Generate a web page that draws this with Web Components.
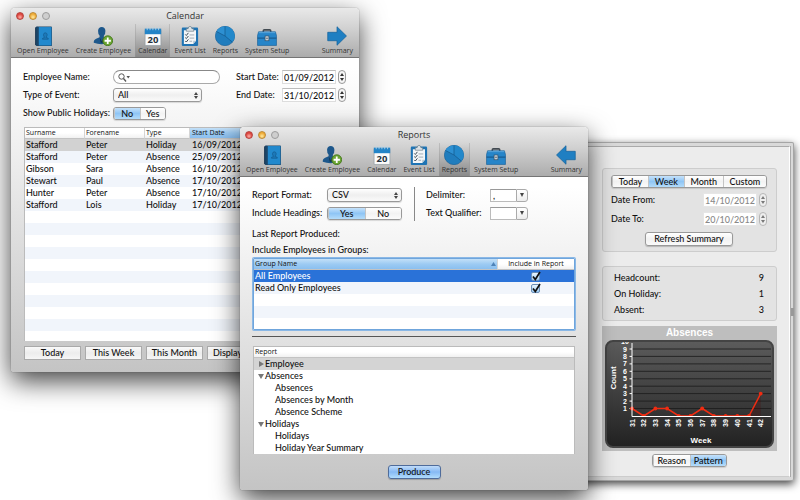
<!DOCTYPE html>
<html lang="en">
<head>
<meta charset="utf-8">
<title>Employee Manager</title>
<style>
  html, body { height: 100%; }
  body {
    margin: 0;
    background: #fff;
    color: #111;
    font: 500 9px/12px Lato, "Noto Sans", sans-serif;
    overflow: hidden;
  }
</style>
</head>
<body>
<app-desktop>
  <side-window slot="summary">
    <summary-pane></summary-pane>
  </side-window>
  <mac-window slot="calendar" heading="Calendar" current="calendar" arrow="right">
    <calendar-pane></calendar-pane>
  </mac-window>
  <mac-window slot="reports" heading="Reports" current="reports" arrow="left">
    <reports-pane></reports-pane>
  </mac-window>
</app-desktop>

<script>
const icons = {
  employee: `
    <path d="M2 1.5 4 .5V19L2 18z" fill="#173450"/>
    <rect x="3" y=".5" width="15" height="18.500" rx=".8" fill="#1c4669"/>
    <rect x="5.500" y="1" width="12" height="17.500" fill="#2289cd"/>
    <path d="M9 12.500V11.800L11 10.800Q9.800 9.500 10 8Q10.200 6.500 11.700 6.500T13.400 8Q13.600 9.500 12.400 10.800L14.500 11.800V12.500z" fill="#1c79b9" stroke="#145d92" stroke-width=".7"/>`,
  create: `
    <path d="M.7 16Q.5 13 3 12L6.300 10.600 6.200 9Q4.700 7.500 4.800 4.500Q5.200 1 8.300 1T11.800 4.500Q11.900 7.500 10.400 9L10.300 10.600 13.500 12Q15.800 13 15.700 16Q8 18.500.7 16z" fill="#1d578b"/>
    <path d="M6.300 10.800 8.300 14.500 10.300 10.800 9.300 16H7.300z" fill="#123653"/>
    <circle cx="14" cy="14" r="4.700" fill="#6ba532" stroke="#3f7419" stroke-width=".8"/>
    <path d="M14 11v6M11 14h6" stroke="#fff" stroke-width="1.700"/>`,
  calendar: `
    <path d="M2 4V18.500H17V4z" fill="#fbfbfb" stroke="#8b979e" stroke-width=".6"/>
    <path d="M1.700 2.500H17.300V7.800H1.700z" fill="#2384c7"/>
    <path d="M4 1v3M6.700 1v3M9.400 1v3M12.100 1v3M14.800 1v3" stroke="#b9d6ea" stroke-width=".8"/>
    <text x="9.500" y="16.500" text-anchor="middle" font-family="Open Sans" font-weight="700" font-size="9" fill="#26333d">20</text>`,
  events: `
    <rect x="1.700" y="1.500" width="15.500" height="17.500" rx="1" fill="#1f74b4"/>
    <path d="M3.700 4H15.200V14L12.500 17H3.700z" fill="#f3f6f8"/>
    <path d="M12.500 17V14H15.200z" fill="#b8c7d2"/>
    <path d="M6 2.500H7.700Q8 .3 9.500.3T11.300 2.500H13V5H6z" fill="#dce2e6" stroke="#667783" stroke-width=".6"/>
    <path d="M5 8 6 9 8 6.500M5 11 6 12 8 9.500M5 14.200 6 15.200 8 12.700" fill="none" stroke="#31404b" stroke-width=".9"/>
    <path d="M9 8.500H13.500M9 11.500H13.500M9 14.500H11.500" stroke="#93a0aa" stroke-width=".8"/>`,
  reports: `
    <circle cx="9.500" cy="9.500" r="9.200" fill="#207dbd" stroke="#165e96" stroke-width=".6"/>
    <path d="M9.500 9.500 1.400 5.200Q4 .5 9.500.5z" fill="#2d90d2"/>
    <path d="M9.500.5A9 9 0 0 1 16.500 15.300L9.500 9.500z" fill="#2388ca"/>
    <path d="M9.500.5V9.500L16.500 15.300M9.500 9.500 1.400 5.200" fill="none" stroke="#155a8e" stroke-width=".7"/>`,
  setup: `
    <path d="M6 6V4.500Q6 3.700 7 3.700H12Q13 3.700 13 4.500V6" fill="none" stroke="#424a51" stroke-width="1.500"/>
    <path d="M1.500 5.500H17.500L18.500 9V18.500H.5V9z" fill="#2685c9" stroke="#195f97" stroke-width=".6"/>
    <path d="M.5 11.500H18.500" stroke="#144f80" stroke-width=".9"/>
    <path d="M1.700 6.300H17.300" stroke="#6bb2e4" stroke-width=".7"/>
    <rect x="7.700" y="9.500" width="3.600" height="4.500" fill="#dfe5e9" stroke="#36536a" stroke-width=".7"/>
    <path d="M9.500 11v1.500" stroke="#26333d" stroke-width="1"/>`,
  right: `<path d="M.7 6H9.500V.7L18.500 9.500 9.500 18.300V14H.7z" fill="#1f7fc2" stroke="#15629c" stroke-width=".7"/>`,
  left: `<path d="M18.300 6H9.500V.7L.5 9.500 9.500 18.300V14H18.300z" fill="#1f7fc2" stroke="#15629c" stroke-width=".7"/>`
};

// Shared pieces that several shadow roots paste into their own <style>
const resets = `
  * { box-sizing: border-box; }
  button, input, select { font: inherit; color: inherit; margin: 0; padding: 0; outline: 0; appearance: none; border-radius: 0; }
`;
const tables = `
  table { width: 100%; border-spacing: 0; table-layout: fixed; }
  td, th { height: 12px; padding: 0 1px; text-align: left; white-space: nowrap; overflow: hidden; line-height: 12px; }
  th { height: 11px; font: 500 7px/10px "Open Sans", sans-serif; background: linear-gradient(#fff 50%, #f1f1f1); border-right: 1px solid #d5d5d5; border-bottom: 1px solid #c3c3c3; }
  th:last-child { border-right: 0; }
  th.sorted { background: linear-gradient(#c3e0f8, #9dcbf3 50%, #8abff0); }
`;

class AppDesktop extends HTMLElement {
  connectedCallback() {
    this.attachShadow({ mode: 'open' });
    this.shadowRoot.innerHTML = `
      <style>
        :host { display: block; position: relative; height: 100%; }
        ::slotted(*) { position: absolute; }
        ::slotted([slot="calendar"]) { left: 11px; top: 8px; width: 43.5%; }
        ::slotted([slot="reports"]) { left: 30%; top: 127px; width: 43.5%; }
        ::slotted([slot="summary"]) { left: 70%; right: 6px; top: 142px; }
      </style>
      <slot name="summary"></slot>
      <slot name="calendar"></slot>
      <slot name="reports"></slot>
    `;
  }
}
customElements.define('app-desktop', AppDesktop);

class MacWindow extends HTMLElement {
  connectedCallback() {
    this.attachShadow({ mode: 'open' });
    const current = this.getAttribute('current');
    const item = (id, label, icon = id) =>
      `<tool-item icon="${icon}" ${id === current ? 'active' : ''}>${label}</tool-item>`;
    this.shadowRoot.innerHTML = `
      <style>
        ${resets}
        :host {
          display: block;
          border-radius: 4px 4px 3px 3px;
          background: linear-gradient(#fff 60px, #c4c4c4);
          box-shadow: 0 0 1px #444, 0 9px 27px rgba(0, 0, 0, .75);
        }
        header {
          height: 50px;
          border-radius: 4px 4px 0 0;
          border-bottom: 1px solid #757575;
          background: linear-gradient(#e9e9e9, #d2d2d2 40%, #acacac);
        }
        .title { display: grid; grid-template-columns: 1fr auto 1fr; align-items: center; height: 16px; padding: 0 5px; }
        .lights { display: flex; gap: 5px; }
        .lights button { width: 8px; height: 8px; border: 1px solid var(--rim); border-radius: 50%; }
        .close { background: radial-gradient(circle at 50% 70%, #ffb0a8, #dd463f 60%); --rim: #b5443f; }
        .min { background: radial-gradient(circle at 50% 70%, #ffe9a0, #efab37 60%); --rim: #bd8a35; }
        .zoom { background: #cecece; --rim: #9c9c9c; }
        h1 { margin: 0; font: 400 9px/12px "Open Sans", sans-serif; color: #333; }
        nav { display: flex; gap: 1px; padding: 0 3px; height: 33px; }
        .gap { flex: 1; }
      </style>
      <header>
        <div class="title">
          <div class="lights">
            <button class="close" aria-label="Close"></button>
            <button class="min" aria-label="Minimise"></button>
            <button class="zoom" aria-label="Zoom"></button>
          </div>
          <h1>${this.getAttribute('heading')}</h1>
        </div>
        <nav>
          ${item('employee', 'Open Employee')}
          ${item('create', 'Create Employee')}
          ${item('calendar', 'Calendar')}
          ${item('events', 'Event List')}
          ${item('reports', 'Reports')}
          ${item('setup', 'System Setup')}
          <span class="gap"></span>
          ${item('summary', 'Summary', this.getAttribute('arrow'))}
        </nav>
      </header>
      <slot></slot>
    `;
  }
}

class ToolItem extends HTMLElement {
  connectedCallback() {
    this.attachShadow({ mode: 'open' });
    this.shadowRoot.innerHTML = `
      <style>
        ${resets}
        :host { display: block; }
        button {
          display: flex; flex-direction: column; align-items: center;
          height: 33px; padding: 2px 3px 0; border: 0; background: none;
          font: 500 7px/10px "Open Sans", sans-serif; color: #333; white-space: nowrap;
        }
        :host([active]) button {
          background: linear-gradient(rgba(0, 0, 0, 0), rgba(0, 0, 0, .2));
          box-shadow: inset 1px 0 #9996, inset -1px 0 #9996;
        }
        svg { width: 20px; height: 20px; }
      </style>
      <button><svg viewBox="0 0 19 19" aria-hidden="true">${icons[this.getAttribute('icon')]}</svg><slot></slot></button>
    `;
  }
}
customElements.define('tool-item', ToolItem);
customElements.define('mac-window', MacWindow);

class SideWindow extends HTMLElement {
  connectedCallback() {
    this.attachShadow({ mode: 'open' });
    this.shadowRoot.innerHTML = `
      <style>
        * { box-sizing: border-box; }
        :host {
          display: flex; box-sizing: border-box; padding: 4px 0 4px 4px;
          border-radius: 2px; background: #d9d9d9;
          box-shadow: inset 0 0 0 1px #a5a5a5, 0 3px 9px rgba(0, 0, 0, .75);
        }
        section { flex: 1; border: 1px solid #aaa; border-right-color: #fff; border-bottom-color: #ccc; background: #ececec; }
        .rail { display: flex; align-items: center; width: 4px; border-left: 1px solid #aaa; }
        .rail i { width: 3px; height: 8px; background: #999; }
      </style>
      <section><slot></slot></section>
      <div class="rail"><i></i></div>
    `;
  }
}
customElements.define('side-window', SideWindow);

class SegControl extends HTMLElement {
  connectedCallback() {
    this.attachShadow({ mode: 'open' });
    const on = this.getAttribute('value');
    this.shadowRoot.innerHTML = `
      <style>
        ${resets}
        :host { display: flex; height: 13px; box-sizing: border-box; border: 1px solid #999; border-radius: 3px; overflow: hidden; box-shadow: 0 1px 1px #0002; }
        button { flex: 1 1 0; border: 0; border-left: 1px solid #c4c4c4; background: linear-gradient(#fff, #f3f3f3 50%, #fbfbfb); line-height: 11px; }
        :host([fit]) button { flex-basis: auto; }
        button:first-child { border-left: 0; }
        button[aria-pressed="true"] { background: linear-gradient(#c5e2fb, #8fc5f5 50%, #b4dcfa); }
      </style>
      ${this.getAttribute('options').split(',').map(o => `<button aria-pressed="${o === on}">${o}</button>`).join('')}
    `;
  }
}
customElements.define('seg-control', SegControl);

class PushButton extends HTMLElement {
  connectedCallback() {
    this.attachShadow({ mode: 'open' });
    this.shadowRoot.innerHTML = `
      <style>
        ${resets}
        :host { display: block; }
        button { width: 100%; height: 14px; border: 1px solid #999; border-radius: 3px; line-height: 12px; background: linear-gradient(#fff, #f2f2f2 50%, #fafafa); box-shadow: 0 1px 1px #0003; white-space: nowrap; }
        :host([square]) button { border-color: #aaa; border-radius: 0; box-shadow: none; background: linear-gradient(#fafafa, #ececec 50%, #f6f6f6); }
        :host([primary]) button { border-color: #4f6c9b; background: linear-gradient(#c0dcfa, #86b9f4 50%, #b1dcfc); }
      </style>
      <button><slot></slot></button>
    `;
  }
}
customElements.define('push-button', PushButton);

class DateField extends HTMLElement {
  connectedCallback() {
    this.attachShadow({ mode: 'open' });
    this.shadowRoot.innerHTML = `
      <style>
        ${resets}
        :host { display: flex; align-items: center; }
        label { flex: 1; }
        input { width: 54px; height: 14px; padding-left: 1px; border: 1px solid #ddd; border-top-color: #bbb; background: #fff; }
        :host([dim]) input { color: #888; border-color: #e6e6e6; }
        button { display: grid; width: 8px; height: 14px; margin-left: 2px; border: 1px solid #999; border-radius: 4px; background: #f6f6f6; place-items: center; }
        :host([dim]) button { opacity: .6; }
        svg { width: 4px; height: 8px; }
      </style>
      <label for="d">${this.getAttribute('label')}</label>
      <input id="d" value="${this.getAttribute('value')}">
      <button aria-label="Step"><svg viewBox="0 0 4 8"><path d="M0 3 2 0 4 3zM0 5 2 8 4 5z" fill="#333"/></svg></button>
    `;
  }
}
customElements.define('date-field', DateField);

// Pop-up menu with its label; the host is display: contents so both sit in the form grid
class PopUp extends HTMLElement {
  connectedCallback() {
    this.attachShadow({ mode: 'open' });
    this.shadowRoot.innerHTML = `
      <style>
        ${resets}
        :host { display: contents; }
        .box { display: grid; align-items: center; width: var(--popup-width, 100%); }
        select { grid-area: 1 / 1; width: 100%; height: 14px; padding: 0 4px; border: 1px solid #999; border-radius: 3px; background: linear-gradient(#fff, #efefef 50%, #fafafa); line-height: 12px; box-shadow: 0 1px 1px #0002; }
        svg { grid-area: 1 / 1; justify-self: end; width: 4px; height: 7px; margin-right: 4px; pointer-events: none; }
      </style>
      <label for="s">${this.getAttribute('label')}</label>
      <div class="box">
        <select id="s"><option>${this.getAttribute('value')}</option></select>
        <svg viewBox="0 0 4 7"><path d="M0 3 2 0 4 3zM0 4 2 7 4 4z" fill="#444"/></svg>
      </div>
    `;
  }
}
customElements.define('pop-up', PopUp);

class ComboBox extends HTMLElement {
  connectedCallback() {
    this.attachShadow({ mode: 'open' });
    this.shadowRoot.innerHTML = `
      <style>
        ${resets}
        :host { display: flex; align-items: center; }
        label { width: 64px; }
        input { width: 26px; height: 13px; padding: 0 2px; border: 1px solid #bbb; border-top-color: #999; border-right: 0; background: #fff; }
        button { display: grid; place-items: center; width: 12px; height: 13px; border: 1px solid #aaa; border-radius: 0 3px 3px 0; background: linear-gradient(#fff, #ededed); }
        svg { width: 4px; height: 4px; }
      </style>
      <label for="c">${this.getAttribute('label')}</label>
      <input id="c" value="${this.getAttribute('value')}">
      <button aria-label="Choose"><svg viewBox="0 0 4 4"><path d="M0 0H4L2 4z" fill="#444"/></svg></button>
    `;
  }
}
customElements.define('combo-box', ComboBox);

class CalendarPane extends HTMLElement {
  connectedCallback() {
    this.attachShadow({ mode: 'open' });
    const rows = [
      ['Stafford', 'Peter', 'Holiday', '16/09/2012'],
      ['Stafford', 'Peter', 'Absence', '25/09/2012'],
      ['Gibson', 'Sara', 'Absence', '16/10/2012'],
      ['Stewart', 'Paul', 'Absence', '17/10/2012'],
      ['Hunter', 'Peter', 'Absence', '17/10/2012'],
      ['Stafford', 'Lois', 'Holiday', '17/10/2012']
    ];
    this.shadowRoot.innerHTML = `
      <style>
        ${resets}
        ${tables}
        :host { display: block; padding: 11px 13px 12px 12px; }
        .form { display: flex; justify-content: space-between; }
        .left { display: grid; grid-template-columns: 90px 107px; grid-auto-rows: 16px; row-gap: 2px; align-items: center; --popup-width: 89px; }
        .search { display: flex; align-items: center; height: 14px; padding: 0 4px; border: 1px solid #aaa; border-top-color: #888; border-radius: 7px; background: #fff; }
        .search svg { width: 12px; height: 9px; }
        .search input { flex: 1; min-width: 0; height: 10px; border: 0; background: none; }
        .dates { display: grid; grid-auto-rows: 16px; row-gap: 2px; align-content: start; width: 110px; }
        seg-control { width: 53px; }
        .list { min-height: 214px; margin: 6px 0 5px 1px; border: 1px solid #bbb; border-bottom: 0; background: repeating-linear-gradient(#fff 0 12px, #f1f5fb 12px 24px) 0 11px; }
        col.name { width: 60px; }
        col.type { width: 45px; }
        td:last-child, th:last-child { padding-left: 2px; }
        tr.selected { background: #d2d2d2; }
        .buttons { display: grid; grid-template-columns: repeat(3, 57px) 41px; gap: 4px; margin-left: 1px; }
      </style>
      <div class="form">
        <div class="left">
          <label for="name">Employee Name:</label>
          <div class="search">
            <svg viewBox="0 0 12 9"><circle cx="3.500" cy="3.500" r="2.700" fill="none" stroke="#555"/><path d="M5.500 5.500 8 8.500" stroke="#555" stroke-width="1.300"/><path d="M8.500 3H12L10.200 5.500z" fill="#555"/></svg>
            <input id="name">
          </div>
          <pop-up label="Type of Event:" value="All"></pop-up>
          <span>Show Public Holidays:</span>
          <seg-control options="No,Yes" value="No" role="group" aria-label="Show Public Holidays"></seg-control>
        </div>
        <div class="dates">
          <date-field label="Start Date:" value="01/09/2012"></date-field>
          <date-field label="End Date:" value="31/10/2012"></date-field>
        </div>
      </div>
      <div class="list">
        <table>
          <colgroup><col class="name"><col class="name"><col class="type"><col></colgroup>
          <thead><tr><th>Surname</th><th>Forename</th><th>Type</th><th class="sorted">Start Date</th></tr></thead>
          <tbody>${rows.map((r, i) => `<tr class="${i ? '' : 'selected'}">${r.map(c => `<td>${c}</td>`).join('')}</tr>`).join('')}</tbody>
        </table>
      </div>
      <div class="buttons">
        <push-button square>Today</push-button>
        <push-button square>This Week</push-button>
        <push-button square>This Month</push-button>
        <push-button square>Display</push-button>
      </div>
    `;
  }
}
customElements.define('calendar-pane', CalendarPane);

class ReportsPane extends HTMLElement {
  connectedCallback() {
    this.attachShadow({ mode: 'open' });
    const groups = ['All Employees', 'Read Only Employees'];
    const reports = [
      ['Employee', 'closed'],
      ['Absences', 'open'], ['Absences'], ['Absences by Month'], ['Absence Scheme'],
      ['Holidays', 'open'], ['Holidays'], ['Holiday Year Summary']
    ];
    const arrow = {
      closed: '<path d="M1 0V6L6 3z" fill="#777"/>',
      open: '<path d="M0 1H6L3 6z" fill="#777"/>'
    };
    this.shadowRoot.innerHTML = `
      <style>
        ${resets}
        ${tables}
        :host { display: block; padding: 10px 12px 11px; }
        .form { display: flex; gap: 12px; margin-bottom: 5px; }
        .left { display: grid; grid-template-columns: 75px 75px; grid-auto-rows: 16px; row-gap: 2px; align-items: center; }
        .right { display: grid; grid-auto-rows: 16px; row-gap: 2px; padding-left: 11px; border-left: 1px solid #888; }
        p { margin: 0; line-height: 16px; }
        .groups { min-height: 72px; margin: 0 1px; border: 1px solid #6fa5dc; border-radius: 1px; box-shadow: 0 0 0 1px #8ab8e6; background: repeating-linear-gradient(#fff 0 12px, #f1f5fb 12px 24px) 0 11px; }
        .groups th div { display: flex; align-items: center; justify-content: space-between; }
        .groups th svg { width: 5px; height: 4px; }
        .groups .flag { width: 76px; }
        .groups th:last-child, .groups td:last-child { text-align: center; }
        .selected td { background: #2a72d8; color: #fff; }
        .tick { display: grid; width: 10px; height: 12px; margin: 0 auto; align-items: center; }
        .tick input { grid-area: 1 / 1; width: 9px; height: 9px; border: 1px solid #6b8fb8; border-radius: 2px; background: linear-gradient(#e9f5fe, #9fcdf5); }
        .tick svg { grid-area: 1 / 1; width: 10px; height: 11px; pointer-events: none; }
        hr { height: 1px; margin: 6px 0 9px; border: 0; background: #555; }
        .reports { margin: 0 1px; border: 1px solid #bbb; border-bottom: 0; background: #fff; }
        .reports td { padding-left: 21px; }
        .reports td.parent { padding-left: 3px; }
        .parent button { display: inline-block; width: 8px; height: 7px; border: 0; background: none; line-height: 7px; }
        .parent svg { width: 6px; height: 6px; }
        tr.current { background: #d4d4d4; }
        push-button { width: 53px; margin: 11px auto 0; }
      </style>
      <div class="form">
        <div class="left">
          <pop-up label="Report Format:" value="CSV"></pop-up>
          <span>Include Headings:</span>
          <seg-control options="Yes,No" value="Yes" role="group" aria-label="Include Headings"></seg-control>
        </div>
        <div class="right">
          <combo-box label="Delimiter:" value=","></combo-box>
          <combo-box label="Text Qualifier:" value=""></combo-box>
        </div>
      </div>
      <p>Last Report Produced:</p>
      <p>Include Employees in Groups:</p>
      <div class="groups">
        <table>
          <colgroup><col><col class="flag"></colgroup>
          <thead><tr>
            <th class="sorted"><div>Group Name<svg viewBox="0 0 5 4"><path d="M0 4H5L2.500 0z" fill="#4f83b8"/></svg></div></th>
            <th>Include in Report</th>
          </tr></thead>
          <tbody>${groups.map((g, i) => `
            <tr class="${i ? '' : 'selected'}"><td><label for="g${i}">${g}</label></td><td><span class="tick"><input type="checkbox" id="g${i}" checked><svg viewBox="0 0 10 11"><path d="M2 5.500 4.300 8.500 9 1" fill="none" stroke="#111" stroke-width="1.700"/></svg></span></td></tr>`).join('')}
          </tbody>
        </table>
      </div>
      <hr>
      <div class="reports">
        <table>
          <thead><tr><th>Report</th></tr></thead>
          <tbody>${reports.map(([name, state], i) => `
            <tr class="${i ? '' : 'current'}"><td class="${state ? 'parent' : ''}">${state ? `<button aria-label="Toggle ${name}"><svg viewBox="0 0 6 6">${arrow[state]}</svg></button>` : ''}${name}</td></tr>`).join('')}
          </tbody>
        </table>
      </div>
      <push-button primary>Produce</push-button>
    `;
  }
}
customElements.define('reports-pane', ReportsPane);

class AbsenceChart extends HTMLElement {
  connectedCallback() {
    this.attachShadow({ mode: 'open' });
    const data = [1, 0, 1, 1, 0, 0, 1, 0, 0, 0, 0, 3];
    const x = i => (27 + i * 11.7).toFixed(1);
    const y = v => (76 - v * 7.45).toFixed(1);
    const counts = [1, 2, 3, 4, 5, 6, 7, 8, 9, 10];
    this.shadowRoot.innerHTML = `
      <style>
        :host { display: block; padding: 0 3px 3px; background: #bebebe; color: #fff; font-family: "Liberation Sans", sans-serif; }
        h2 { margin: 0; font-size: 10px; font-weight: 700; line-height: 14px; text-align: center; }
        svg { display: block; width: 100%; }
        text { fill: #fff; font-weight: 700; text-anchor: middle; }
      </style>
      <h2>Absences</h2>
      <svg viewBox="0 0 169 108" role="img" aria-label="Absences per week">
        <defs>
          <linearGradient id="bg" x2="0" y2="1"><stop offset="0" stop-color="#5c5c5c"/><stop offset="1" stop-color="#222"/></linearGradient>
          <clipPath id="plot"><rect x="0" y="2" width="169" height="75"/></clipPath>
        </defs>
        <rect x="1" y="1" width="167" height="106" rx="7" fill="url(#bg)" stroke="#444" stroke-width="2"/>
        <g clip-path="url(#plot)" font-size="7">
          ${counts.map(v => `<path d="M27 ${y(v)}H166" stroke="#1a1a1a" stroke-width=".8"/><path d="M24.500 ${y(v)}H27" stroke="#fff"/><text x="20" y="${+y(v) + 2.5}">${v}</text>`).join('')}
          <path d="M${x(11)} 76V53.600L${x(10)} 76z" fill="#500" opacity=".25"/>
          <polyline points="${data.map((v, i) => `${x(i)},${y(v)}`).join(' ')}" fill="none" stroke="#f02c12" stroke-width="1.500"/>
          ${data.map((v, i) => `<circle cx="${x(i)}" cy="${y(v)}" r="1.900" fill="#f02c12"/>`).join('')}
        </g>
        <path d="M27 3V76.500H166" fill="none" stroke="#fff" stroke-width="1"/>
        <g font-size="7">
          ${data.map((v, i) => `<text transform="translate(${+x(i) + 2.5} 83) rotate(-90)">${31 + i}</text>`).join('')}
        </g>
        <text x="96" y="103" font-size="8">Week</text>
        <text transform="translate(11 38) rotate(-90)" font-size="8">Count</text>
      </svg>
    `;
  }
}
customElements.define('absence-chart', AbsenceChart);

class SummaryPane extends HTMLElement {
  connectedCallback() {
    this.attachShadow({ mode: 'open' });
    this.shadowRoot.innerHTML = `
      <style>
        * { box-sizing: border-box; }
        :host { display: block; padding: 21px 12px 9px 37px; }
        .box { border: 1px solid #cdcdcd; border-radius: 3px; background: #e3e3e3; }
        .range { display: grid; gap: 5px; padding: 6px 9px 5px 8px; }
        .range push-button { width: 88px; justify-self: center; margin-top: 1px; }
        dl { display: grid; grid-template-columns: 1fr auto; row-gap: 4px; margin: 14px 0 5px; padding: 5px 12px 4px 11px; }
        dd { margin: 0; text-align: right; }
        .view { width: 75px; margin: 3px auto 0; }
      </style>
      <div class="box range">
        <seg-control fit options="Today,Week,Month,Custom" value="Week"></seg-control>
        <date-field dim label="Date From:" value="14/10/2012"></date-field>
        <date-field dim label="Date To:" value="20/10/2012"></date-field>
        <push-button>Refresh Summary</push-button>
      </div>
      <dl class="box">
        <dt>Headcount:</dt><dd>9</dd>
        <dt>On Holiday:</dt><dd>1</dd>
        <dt>Absent:</dt><dd>3</dd>
      </dl>
      <absence-chart></absence-chart>
      <seg-control class="view" options="Reason,Pattern" value="Pattern"></seg-control>
    `;
  }
}
customElements.define('summary-pane', SummaryPane);
</script>
</body>
</html>
